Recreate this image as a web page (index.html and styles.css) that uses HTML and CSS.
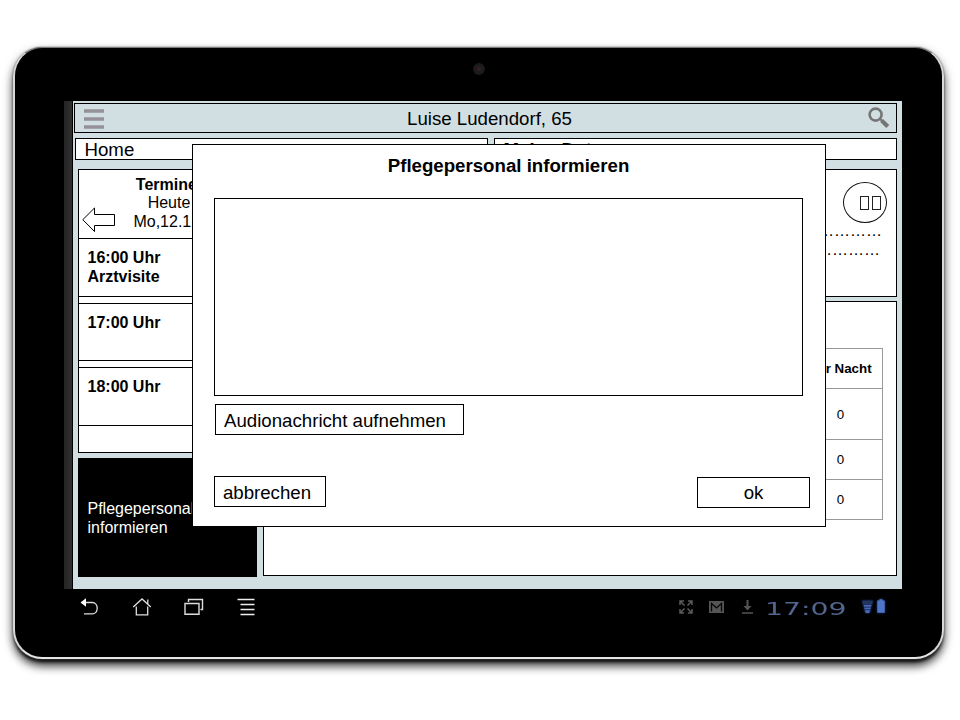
FILE: index.html
```html
<!DOCTYPE html>
<html lang="de">
<head>
<meta charset="utf-8">
<title>Pflegepersonal informieren</title>
<link rel="stylesheet" href="styles.css">
</head>
<body>
<div class="device">
  <div class="bezel"><span class="camera"></span></div>
  <div class="display">
    <div class="strip"></div>
    <main class="app">
      <header class="topbar">
        <svg class="menu" width="20" height="20" viewBox="0 0 20 20"><path d="M0 2h20M0 10h20M0 18h20" stroke="#959297" stroke-width="3.6"/></svg>
        <h1>Luise Ludendorf, 65</h1>
        <svg class="search" width="22" height="22" viewBox="0 0 22 22" fill="none" stroke="#757575"><circle cx="7.6" cy="7.6" r="6" stroke-width="2.6"/><path d="M12 12l2.5 2.2" stroke-width="2.2"/><path d="M13.600 13.400l6.200 6" stroke-width="4.200"/></svg>
      </header>
      <nav class="tabs"><div class="tab">Home</div><div class="tab">Meine Daten</div></nav>
      <div class="content">
        <aside class="side">
          <section class="dates">
            <div class="dates-head">
              <svg class="arrow" width="35" height="26" viewBox="0 0 35 26" fill="#fff" stroke="#000"><path d="M.8 12.7L12.5 1v6.5h20v11h-20v6z"/></svg>
              <p><b>Termine:</b><br>Heute<br>Mo,12.12.</p>
            </div>
            <div class="slot">16:00 Uhr<br>Arztvisite</div>
            <div class="slot">17:00 Uhr</div>
            <div class="slot">18:00 Uhr</div>
          </section>
          <div class="call">Pflegepersonal<br>informieren</div>
        </aside>
        <div class="main">
          <section class="notes">
            <div class="pause"><i></i><i></i></div>
            <p class="dots">……………<br><span>……………</span></p>
          </section>
          <section class="meds">
            <table>
              <tr class="r1"><th>Zur Nacht</th></tr>
              <tr class="r2"><td>0</td></tr>
              <tr class="r3"><td>0</td></tr>
              <tr class="r3"><td>0</td></tr>
            </table>
          </section>
        </div>
      </div>
    </main>
  </div>
  <footer class="sysbar">
    <div class="keys">
      <svg width="20" height="18" viewBox="0 0 20 18" fill="none" stroke="#ddd" stroke-width="1.3"><path d="M5 4.5h7.2c3 0 5 2.5 5 5.7s-2 5.6-5 5.6H4"/><path d="M.5 4.500L6 .3v8.400z" fill="#fff" stroke="none"/></svg>
      <svg width="20" height="18" viewBox="0 0 20 18" fill="none" stroke="#ddd" stroke-width="1.3"><path d="M1.2 9L10 1l8.800 8M15.800 6V1.500M4.300 8.500v8.300h11.400V8.500"/></svg>
      <svg width="20" height="18" viewBox="0 0 20 18" fill="none" stroke="#ddd" stroke-width="1.4"><path d="M1 5.500h14v10.700H1zM4.500 4V1.500h14v10H16.500"/></svg>
      <svg width="20" height="18" viewBox="0 0 20 18" stroke="#eee" stroke-width="1.3"><path d="M1.500 1.500h17M4.500 6.500h14M4.500 11.500h14M4.500 16.500h14"/></svg>
    </div>
    <div class="status">
      <svg width="14" height="14" viewBox="0 0 14 14" fill="none" stroke="#5a5a5a" stroke-width="1.5"><path d="M1 5V1h4M1 1l4.500 4.500M9 1h4v4M13 1L8.500 5.500M1 9v4h4M1 13l4.500-4.500M13 9v4H9M13 13L8.500 8.500"/></svg>
      <svg class="mail" width="15" height="12" viewBox="0 0 15 12"><path d="M0 0h15v12H0z" fill="#555"/><path d="M2.500 10.500V2.500l5 4.500 5-4.500v8" fill="none" stroke="#050505" stroke-width="1.300"/></svg>
      <svg class="down" width="11" height="14" viewBox="0 0 11 14" fill="#555"><path d="M4.500 0h2v6h3l-4 4.500L1.500 6h3zM0 12.300h11v1.500H0z"/></svg>
      <span class="clock"><span>17:09</span></span>
      <svg class="wifi" width="11" height="14" viewBox="0 0 11 14"><path d="M0 .8h11L9.700 4H1.300z" fill="#24365e"/><path d="M1.300 4h8.400L7.300 13H3.700z" fill="#4668b5"/><path d="M1 4.500h9M2 7.200h7M2 9.700h7" stroke="#14234a" stroke-width=".8"/></svg>
      <svg class="battery" width="8" height="14" viewBox="0 0 8 14" fill="#4f75c9"><path d="M.3 1.600h2.200V.2h3v1.400h2.200V13.800H.3z"/></svg>
    </div>
  </footer>
  <div class="dialog" role="dialog">
    <h2>Pflegepersonal informieren</h2>
    <div class="message"></div>
    <button class="audio">Audionachricht aufnehmen</button>
    <div class="actions"><button class="cancel">abbrechen</button><button class="ok">ok</button></div>
  </div>
</div>
</body>
</html>
```
FILE: styles.css
```css
* { box-sizing: border-box; }
body { margin: 0; width: 960px; height: 720px; overflow: hidden; background: #fff; color: #000; font: 16px/19px "Liberation Sans", Arial, sans-serif; }
h1, h2, p { margin: 0; }
svg { display: block; flex: none; }
.device { position: relative; width: 931px; height: 612px; margin: 47px 0 0 13px; border: 2px solid #d8d8d8; border-top: 1px solid #777; border-bottom-color: #e6e6e6; border-radius: 29px; background: #000; box-shadow: 0 0 2px #666, 0 4px 3px -1px #111, 0 8px 10px -1px rgba(0,0,0,.65), 0 4px 11px rgba(0,0,0,.35); }
.bezel { height: 53px; display: flex; justify-content: center; padding: 15px 0 0 1px; }
.camera { width: 12px; height: 12px; border-radius: 50%; background: radial-gradient(circle, #421c1c 0 1px, #201e1f 2px, #161616); }
.display { display: flex; height: 488px; padding-left: 49px; }
.strip { width: 8px; margin-right: 1px; background: linear-gradient(90deg, #242424, #303030); }
.app { width: 829px; padding: 2px 5px 0 1px; background: #d1dfe2; }
.topbar { display: flex; align-items: center; justify-content: space-between; width: 823px; height: 30px; padding: 1px 6px 0 9px; border: 1px solid #000; }
.topbar h1 { padding-left: 7px; font-size: 18.67px; font-weight: normal; line-height: 22px; }
.search { margin-top: -1px; }
.tabs { display: flex; gap: 6px; margin: 5px 0 9px 1px; }
.tab { flex: none; width: 413px; height: 22px; padding-left: 8.5px; border: 1px solid #000; background: #fff; font-size: 18.67px; line-height: 21px; }
.tab + .tab { width: 403px; font-weight: bold; }
.content { display: flex; gap: 6px; padding-left: 4px; }
.side { width: 179px; display: flex; flex-direction: column; gap: 5px; }
.dates { height: 284px; border: 1px solid #000; background: #fff; }
.dates-head { height: 68px; display: flex; padding: 5.5px 0 0 3px; }
.arrow { margin: 31.5px 0 0; }
.dates-head p { width: 104px; text-align: center; line-height: 18.5px; }
.slot { height: 59px; margin: 0 -1px 6px; padding: 9px 8.5px; border: 1px solid #000; font-weight: bold; }
.slot:nth-of-type(3) { height: 58px; }
.call { height: 119px; padding: 41px 9.5px 0; background: #000; color: #fff; }
.main { display: flex; flex-direction: column; gap: 4px; }
.notes, .meds { width: 634px; border: 1px solid #000; background: #fff; }
.notes { height: 128px; padding: 12px 9px 0 0; }
.pause { width: 44px; height: 41px; margin-left: auto; display: flex; gap: 3px; padding: 13px 0 0 16px; border: 1.3px solid #111; border-radius: 50%; }
.pause i { width: 9px; height: 14px; border: 1px solid #222; }
.dots { text-align: right; padding-right: 5px; margin-top: -2px; }
.dots span { margin-right: 2px; }
.meds { height: 275px; padding: 46px 13px 0; }
table { margin-left: auto; width: 85px; border-collapse: collapse; font-size: 13.33px; }
th, td { padding: 0; border: 1px solid #999; text-align: center; }
.r1 { height: 40px; }
.r2 { height: 51px; }
.r3 { height: 40px; }
.sysbar { display: flex; justify-content: space-between; padding: 8px 57px 0 65px; }
.keys { display: flex; gap: 32px; padding-top: 1px; }
.status { display: flex; align-items: flex-start; padding-top: 3px; }
.mail { margin: 1px 0 0 16px; }
.down { margin-left: 18px; }
.clock { width: 82px; margin-left: 12px; color: #52658f; }
.clock span { display: inline-block; font: 18.5px/11px "DejaVu Sans", sans-serif; transform: scaleX(1.53); transform-origin: 0 0; }
.wifi { margin-left: 15px; filter: drop-shadow(0 0 1px #2648a0); }
.battery { margin-left: 4px; margin-top: -1px; filter: drop-shadow(0 0 1px #2648a0); }
.dialog { position: absolute; left: 177px; top: 96px; width: 634px; height: 383px; padding: 10px 15px 0 21px; border: 1px solid #000; background: #fff; }
.dialog h2 { width: 589px; font-size: 18.67px; line-height: 22px; text-align: center; }
.message { width: 589px; height: 198px; margin-top: 21px; border: 1px solid #000; }
button { display: block; height: 31px; padding: 1px 0 0; border: 1px solid #000; background: #fff; color: #000; font: 18.67px/29px "Liberation Sans", Arial, sans-serif; }
.audio { width: 249px; margin: 8px 0 0 1px; padding-right: 9px; }
.actions { display: flex; justify-content: space-between; margin-top: 41px; }
.cancel { width: 112px; padding-right: 6px; }
.ok { width: 113px; margin-top: 1px; padding-top: 0; }
```
